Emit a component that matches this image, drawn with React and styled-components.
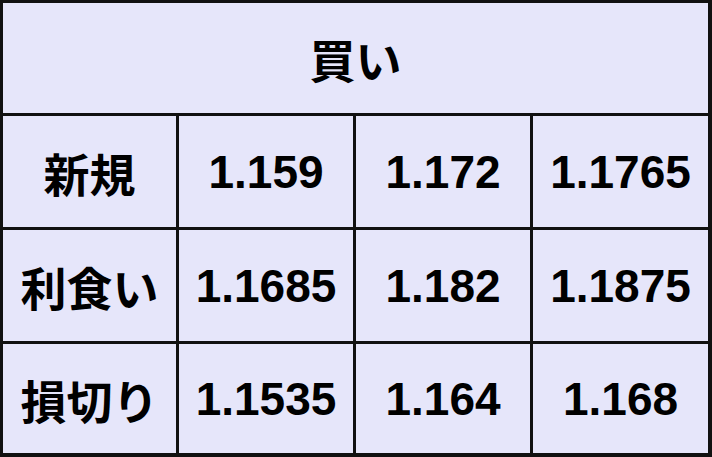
import React from "react";
import styled, { createGlobalStyle } from "styled-components";

const Global = createGlobalStyle`
  html, body { margin: 0; padding: 0; background: #ffffff; }
  #root { width: 712px; height: 457px; }
`;

const Table = styled.div`
  box-sizing: border-box;
  width: 712px;
  height: 457px;
  display: grid;
  grid-template-columns: 173fr 174fr 174fr 175fr;
  grid-template-rows: 110fr 111fr 111fr 109fr;
  gap: 3px;
  padding: 3px 4px 4px 3px;
  background: #111111;
`;

const Cell = styled.div`
  background: #e6e6fa;
  display: flex;
  align-items: center;
  justify-content: center;
  font-family: "Liberation Sans", Arial, "Noto Sans CJK JP", sans-serif;
  font-weight: bold;
  font-size: 46px;
  color: #000000;
  white-space: nowrap;
  grid-column: ${(p) => (p.$span ? `span ${p.$span}` : "auto")};
`;

const rows = [
  ["新規", "1.159", "1.172", "1.1765"],
  ["利食い", "1.1685", "1.182", "1.1875"],
  ["損切り", "1.1535", "1.164", "1.168"],
];

export default function App() {
  return (
    <>
      <Global />
      <Table>
        <Cell $span={4}>買い</Cell>
        {rows.map((r) =>
          r.map((v, i) => <Cell key={r[0] + i}>{v}</Cell>)
        )}
      </Table>
    </>
  );
}
